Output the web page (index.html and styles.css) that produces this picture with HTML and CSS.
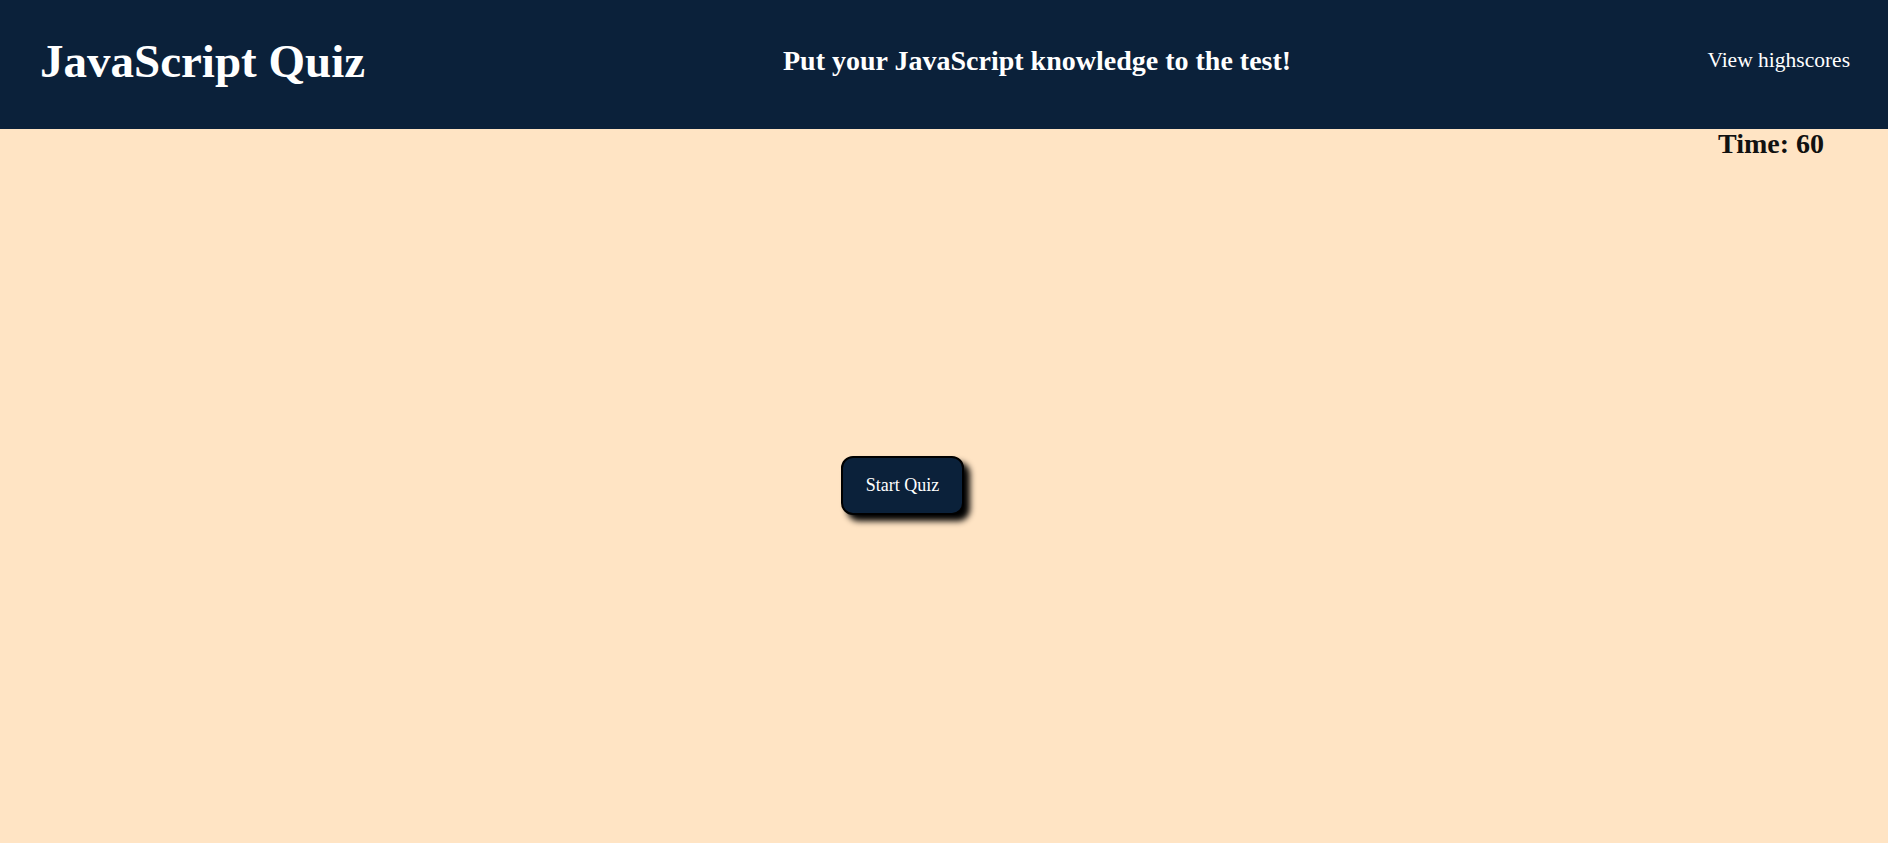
FILE: index.html
```html
<!DOCTYPE html>
<html lang="en">
<head>
<meta charset="utf-8">
<title>JavaScript Quiz</title>
<link rel="stylesheet" href="styles.css">
</head>
<body>
<header class="topbar">
  <h1 class="title">JavaScript Quiz</h1>
  <p class="tagline">Put your JavaScript knowledge to the test!</p>
  <a class="scores" href="#">View highscores</a>
</header>
<div class="timer-row">
  <span class="timer">Time: 60</span>
</div>
<main class="stage">
  <button class="start">Start Quiz</button>
</main>
</body>
</html>
```

FILE: styles.css
```css
html, body {
  margin: 0;
  padding: 0;
}
body {
  background: #ffe4c4;
  font-family: "Liberation Serif", "DejaVu Serif", serif;
  min-height: 843px;
}
.topbar {
  height: 129px;
  background: #0b213a;
  color: #fff;
  display: flex;
  align-items: center;
  padding: 0 38px 8px 40px;
  box-sizing: border-box;
}
.title {
  margin: 0;
  font-size: 47px;
  font-weight: bold;
  width: 743px;
}
.tagline {
  margin: 0;
  font-size: 28px;
  font-weight: bold;
  flex: 1;
}
.scores {
  color: #fff;
  text-decoration: none;
  font-size: 21.5px;
}
.timer-row {
  display: flex;
  justify-content: flex-end;
  padding-right: 64px;
  line-height: 1.05;
}
.timer {
  font-size: 28px;
  font-weight: bold;
  color: #111;
}
.stage {
  display: flex;
  padding-top: 298px;
  padding-left: 841px;
}
.start {
  width: 123px;
  height: 59px;
  background: #0b213a;
  color: #fff;
  border: 2px solid #000;
  border-radius: 12px;
  box-shadow: 6px 6px 6px #000;
  font-family: inherit;
  font-size: 18px;
  cursor: pointer;
}
```
